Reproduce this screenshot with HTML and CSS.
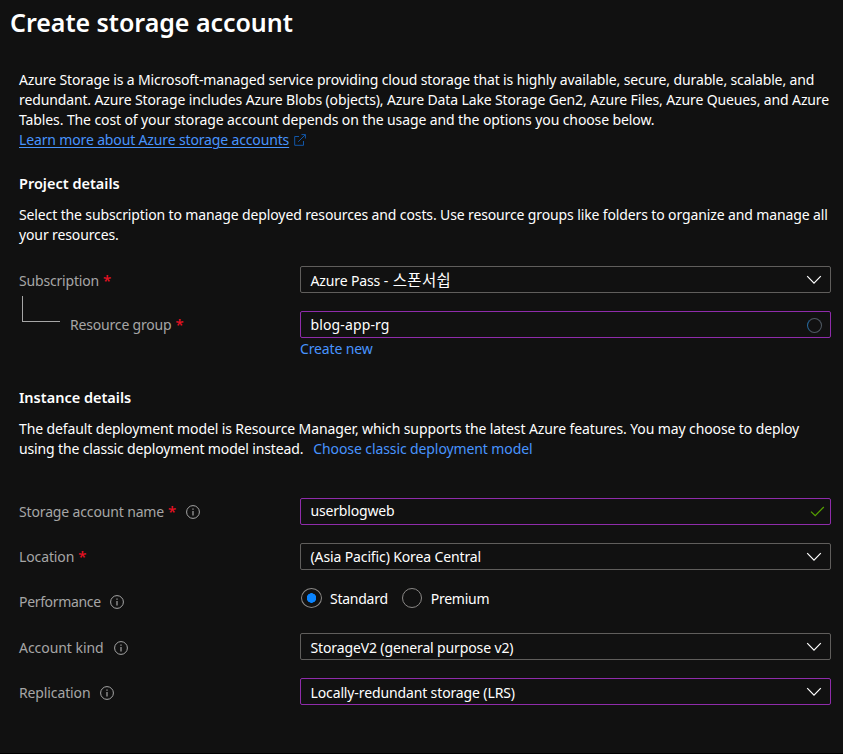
FILE: index.html
```html
<!DOCTYPE html>
<html lang="en">
<head>
<meta charset="utf-8">
<title>Create storage account</title>
<link rel="stylesheet" href="styles.css">
</head>
<body>
<svg class="defs" width="0" height="0" aria-hidden="true">
  <symbol id="chevron" viewBox="0 0 16 10"><path d="M1.2 1.2 8 8.2l6.800-7" fill="none" stroke="currentColor" stroke-width="1.200"/></symbol>
  <symbol id="info" viewBox="0 0 14 14"><circle cx="7" cy="7" r="6.4" fill="none" stroke="currentColor"/><path d="M7 6v4.400M7 3.500v1.300" stroke="currentColor" stroke-width="1.200"/></symbol>
</svg>
<main class="page">
  <h1 class="title">Create storage account</h1>
  <div class="content">
    <p class="para">
      <span class="line">Azure Storage is a Microsoft-managed service providing cloud storage that is highly available, secure, durable, scalable, and</span>
      <span class="line">redundant. Azure Storage includes Azure Blobs (objects), Azure Data Lake Storage Gen2, Azure Files, Azure Queues, and Azure</span>
      <span class="line t-cost">Tables. The cost of your storage account depends on the usage and the options you choose below.</span>
      <span class="line"><a class="link underlined">Learn more about Azure storage accounts</a><svg class="external" width="12" height="12" viewBox="0 0 12 12"><path d="M5 2.500H.7v8.800h8.800V7M4.200 7.800 11.300.7M7.500.6h3.900v3.900" fill="none" stroke="currentColor"/></svg></span>
    </p>

    <h2 class="heading">Project details</h2>
    <p class="para">
      <span class="line">Select the subscription to manage deployed resources and costs. Use resource groups like folders to organize and manage all</span>
      <span class="line">your resources.</span>
    </p>
    <div class="form project">
      <div class="row">
        <div class="label low"><span class="tight">Subscription</span><b class="req">*</b></div>
        <div class="field low"><span>Azure Pass - <span class="korean">스폰서쉽</span></span><svg class="chevron" width="16" height="10"><use href="#chevron"/></svg></div>
      </div>
      <div class="row">
        <div class="label"><i class="elbow"></i><span class="tight">Resource group</span><b class="req">*</b></div>
        <div class="field changed"><span class="wide">blog-app-rg</span><i class="spinner"></i></div>
      </div>
      <a class="link create">Create new</a>
    </div>

    <h2 class="heading instance">Instance details</h2>
    <p class="para">
      <span class="line t-model">The default deployment model is Resource Manager, which supports the latest Azure features. You may choose to deploy</span>
      <span class="line"><span class="t-classic">using the classic deployment model instead.</span><a class="link classic">Choose classic deployment model</a></span>
    </p>
    <div class="form details">
      <div class="row">
        <div class="label"><span class="t-classic">Storage account name</span><b class="req">*</b><svg class="info after-req" width="14" height="14"><use href="#info"/></svg></div>
        <div class="field changed high"><span class="tight">userblogweb</span><svg class="check" width="15" height="11" viewBox="0 0 15 11"><path d="m1 5.600 4.200 4L13.800 1" fill="none" stroke="currentColor" stroke-width="1.200"/></svg></div>
      </div>
      <div class="row">
        <div class="label"><span>Location</span><b class="req">*</b></div>
        <div class="field"><span>(Asia Pacific) Korea Central</span><svg class="chevron" width="16" height="10"><use href="#chevron"/></svg></div>
      </div>
      <div class="row">
        <div class="label"><span class="tighter">Performance</span><svg class="info" width="14" height="14"><use href="#info"/></svg></div>
        <div class="radios">
          <i class="radio selected"></i><span class="radio-text">Standard</span>
          <i class="radio second"></i><span class="radio-text">Premium</span>
        </div>
      </div>
      <div class="row">
        <div class="label low"><span class="normal">Account kind</span><svg class="info" width="14" height="14"><use href="#info"/></svg></div>
        <div class="field low"><span>StorageV2 (general purpose v2)</span><svg class="chevron" width="16" height="10"><use href="#chevron"/></svg></div>
      </div>
      <div class="row">
        <div class="label low"><span>Replication</span><svg class="info wide-gap" width="14" height="14"><use href="#info"/></svg></div>
        <div class="field changed low"><span>Locally-redundant storage (LRS)</span><svg class="chevron" width="16" height="10"><use href="#chevron"/></svg></div>
      </div>
    </div>
  </div>
</main>
</body>
</html>
```
FILE: styles.css
```css
* { box-sizing: border-box; }
body {
  margin: 0;
  background: #111;
  color: #fff;
  font: 14px/20px "Noto Sans", "Noto Sans CJK KR", sans-serif;
  letter-spacing: -0.125px;
  overflow: hidden;
}
.defs { display: block; }
.page { height: 754px; border-bottom: 1px solid #000; }
.title { margin: 0; padding: 4px 0 0 10px; height: 70px; font-size: 25px; line-height: 36px; font-weight: 600; letter-spacing: -0.04px; white-space: nowrap; }
.content { padding-left: 19px; }
.para { margin: 0; }
.line { display: block; width: max-content; height: 20px; white-space: nowrap; }
.t-cost, .t-model { letter-spacing: -0.107px; }
.t-classic { letter-spacing: -0.145px; }
.tight { letter-spacing: -0.18px; }
.tighter { letter-spacing: -0.34px; }
.wide { letter-spacing: 0.13px; }
.normal { letter-spacing: -0.05px; }
.link { color: #4894fe; }
.classic { margin-left: 10px; letter-spacing: -0.1px; }
.underlined { letter-spacing: -0.145px; text-decoration: underline; text-underline-offset: 2px; text-decoration-thickness: 1px; }
.external { margin-left: 5px; color: #1257a8; vertical-align: -1px; }
.heading { margin: 23px 0 12px; font-size: 14.5px; line-height: 20px; font-weight: 600; letter-spacing: 0; }
.form { display: flex; flex-direction: column; gap: 18px; width: 812px; }
.project { margin-top: 21px; }
.row { display: grid; grid-template-columns: 281px 531px; height: 27px; align-items: center; }
.label { display: flex; align-items: center; color: #a6a6a6; white-space: nowrap; }
.label.low { padding-top: 2px; }
.req { width: 7px; margin: -1px 0 1px 4px; color: #e81123; font-size: 15px; font-weight: 500; }
.field { display: flex; align-items: center; justify-content: space-between; height: 27px; padding: 1px 8px 0 9.5px; border: 1px solid #605e5c; border-radius: 2px; white-space: nowrap; }
.field.low { padding-top: 3px; }
.field.high { padding-top: 0; padding-bottom: 1px; }
.field.low .chevron { margin-top: -2px; }
.changed { border-color: #8f2cab; }
.korean { font-size: 15.5px; line-height: 1; letter-spacing: 0.4px; margin-left: 1px; }
.elbow { width: 38px; height: 26px; margin: -31px 10px 0 3px; border: solid #a6a6a6; border-width: 0 0 1px 1px; }
.spinner { width: 15px; height: 15px; border: 1px solid #4f5963; border-left-color: #27699d; border-radius: 50%; }
.create { margin: -17px 0 0 281px; }
.instance { margin-top: 28px; }
.details { margin-top: 39px; }
.info { margin-left: 9px; }
.after-req { margin-left: 11px; }
.wide-gap { margin-left: 10px; }
.normal + .info { margin-left: 10px; }
.check { margin-right: -3px; color: #57a300; }
.radios { display: flex; align-items: center; height: 21px; margin-top: -6px; padding-left: 1px; letter-spacing: -0.26px; white-space: nowrap; }
.radio { width: 21px; height: 20px; margin-top: -1px; border: 1px solid #8a8886; border-radius: 50%; }
.selected { background: radial-gradient(circle, #0a84ff 4.500px, transparent 5px); }
.radio-text { margin-left: 8px; }
.second { width: 20px; margin-left: 14px; }
.second + .radio-text { margin-left: 9px; }
```
